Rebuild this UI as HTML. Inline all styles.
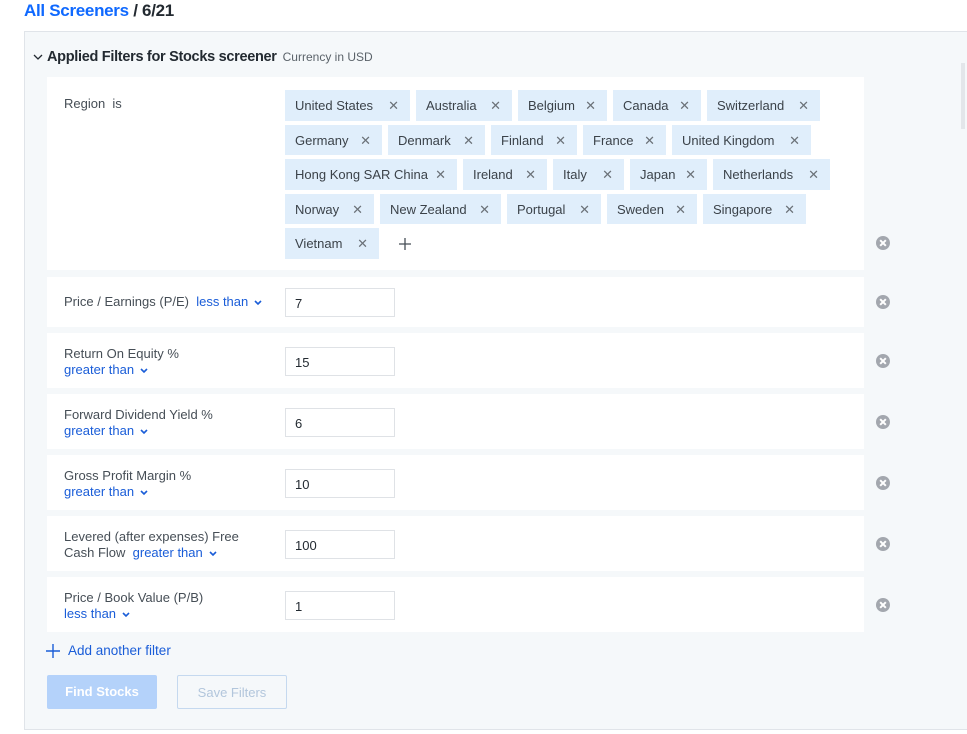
<!DOCTYPE html>
<html><head><meta charset="utf-8"><style>
*{box-sizing:border-box;margin:0;padding:0}
body{width:967px;height:734px;background:#fff;font-family:"Liberation Sans",sans-serif;position:relative;overflow:hidden;color:#464e56}
.a{position:absolute}
.h1{left:24px;top:1px;font-size:17px;font-weight:bold;color:#232a31;letter-spacing:-0.3px}
.h1 span{color:#0f69ff}
.box{left:24px;top:31px;width:960px;height:699px;background:#f5f8fa;border:1px solid #e0e4e9;border-right:none}
.ttl{left:47px;top:49px;font-size:14.5px;font-weight:bold;color:#232a31;letter-spacing:-0.3px}
.ttl small{font-size:12px;font-weight:normal;color:#5b636a;margin-left:6px;letter-spacing:0}
.chev{left:32px;top:51px;width:12px;height:12px}
.row{left:47px;width:817px;background:#fff}
.lbl{left:64px;font-size:13px;line-height:16px;color:#464e56}
.blue{color:#1a5dd8}
.dd{display:inline-block;width:8px;height:6px;margin-left:6px;vertical-align:middle}
.inp{left:285px;width:110px;height:29px;border:1px solid #dfe2e6;background:#fff;font-size:13px;color:#232a31;padding:7px 9px}
.tags{left:285px;top:90px;width:560px;display:flex;flex-wrap:wrap;row-gap:4px;column-gap:6px}
.tag{height:30.5px;background:#e0eefb;font-size:13px;color:#3b4249;padding:8px 0 0 10px;position:relative;white-space:nowrap}
.tag i{position:absolute;right:11px;top:8px;font-style:normal;font-size:13px;color:#6b7178}
.x{left:876px;width:14px;height:14px;border-radius:50%;background:#a3a7ae}
.x:before,.x:after{content:"";position:absolute;left:3px;top:6px;width:8px;height:2px;background:#fff;transform:rotate(45deg)}
.x:after{transform:rotate(-45deg)}
.btn{top:675px;width:110px;height:34px;font-size:13px;font-weight:bold;text-align:center;line-height:34px}
</style></head><body>
<div class="a h1"><span>All Screeners</span> / 6/21</div>
<div class="a box"></div>
<div class="a" style="left:961px;top:63px;width:4px;height:66px;background:#e3e6ea"></div>
<svg class="a chev" viewBox="0 0 12 12"><path d="M2 4l4 4 4-4" fill="none" stroke="#232a31" stroke-width="1.3"/></svg>
<div class="a ttl">Applied Filters for Stocks screener<small>Currency in USD</small></div>

<div class="a row" style="top:77px;height:193px"></div>
<div class="a lbl" style="top:96px">Region&nbsp; is</div>
<div class="a tags">
<div class="tag" style="width:125px">United States<i>✕</i></div>
<div class="tag" style="width:96px">Australia<i>✕</i></div>
<div class="tag" style="width:89px">Belgium<i>✕</i></div>
<div class="tag" style="width:88px">Canada<i>✕</i></div>
<div class="tag" style="width:113px">Switzerland<i>✕</i></div>
<div class="tag" style="width:97px">Germany<i>✕</i></div>
<div class="tag" style="width:97px">Denmark<i>✕</i></div>
<div class="tag" style="width:86px">Finland<i>✕</i></div>
<div class="tag" style="width:83px">France<i>✕</i></div>
<div class="tag" style="width:139px">United Kingdom<i>✕</i></div>
<div class="tag" style="width:172px">Hong Kong SAR China<i>✕</i></div>
<div class="tag" style="width:84px">Ireland<i>✕</i></div>
<div class="tag" style="width:71px">Italy<i>✕</i></div>
<div class="tag" style="width:77px">Japan<i>✕</i></div>
<div class="tag" style="width:117px">Netherlands<i>✕</i></div>
<div class="tag" style="width:89px">Norway<i>✕</i></div>
<div class="tag" style="width:121px">New Zealand<i>✕</i></div>
<div class="tag" style="width:94px">Portugal<i>✕</i></div>
<div class="tag" style="width:90px">Sweden<i>✕</i></div>
<div class="tag" style="width:103px">Singapore<i>✕</i></div>
<div class="tag" style="width:94px">Vietnam<i>✕</i></div>
<svg width="14" height="14" viewBox="0 0 14 14" style="margin:9px 0 0 13px"><path d="M7 1v12M1 7h12" stroke="#464e56" stroke-width="1.3"/></svg>
</div>
<div class="a x" style="top:236px"></div>

<div class="a row" style="top:277px;height:50px"></div>
<div class="a lbl" style="top:294px">Price / Earnings (P/E)&nbsp; <span class="blue">less than</span><svg class="dd" viewBox="0 0 8 6"><path d="M1 1l3 3 3-3" fill="none" stroke="#1a5dd8" stroke-width="1.6"/></svg></div>
<div class="a inp" style="top:288px">7</div>
<div class="a x" style="top:295px"></div>

<div class="a row" style="top:333px;height:55px"></div>
<div class="a lbl" style="top:346px">Return On Equity %<br><span class="blue">greater than</span><svg class="dd" viewBox="0 0 8 6"><path d="M1 1l3 3 3-3" fill="none" stroke="#1a5dd8" stroke-width="1.6"/></svg></div>
<div class="a inp" style="top:347px">15</div>
<div class="a x" style="top:354px"></div>

<div class="a row" style="top:394px;height:55px"></div>
<div class="a lbl" style="top:407px">Forward Dividend Yield %<br><span class="blue">greater than</span><svg class="dd" viewBox="0 0 8 6"><path d="M1 1l3 3 3-3" fill="none" stroke="#1a5dd8" stroke-width="1.6"/></svg></div>
<div class="a inp" style="top:408px">6</div>
<div class="a x" style="top:415px"></div>

<div class="a row" style="top:455px;height:55px"></div>
<div class="a lbl" style="top:468px">Gross Profit Margin %<br><span class="blue">greater than</span><svg class="dd" viewBox="0 0 8 6"><path d="M1 1l3 3 3-3" fill="none" stroke="#1a5dd8" stroke-width="1.6"/></svg></div>
<div class="a inp" style="top:469px">10</div>
<div class="a x" style="top:476px"></div>

<div class="a row" style="top:516px;height:55px"></div>
<div class="a lbl" style="top:529px">Levered (after expenses) Free<br>Cash Flow&nbsp; <span class="blue">greater than</span><svg class="dd" viewBox="0 0 8 6"><path d="M1 1l3 3 3-3" fill="none" stroke="#1a5dd8" stroke-width="1.6"/></svg></div>
<div class="a inp" style="top:530px">100</div>
<div class="a x" style="top:537px"></div>

<div class="a row" style="top:577px;height:55px"></div>
<div class="a lbl" style="top:590px">Price / Book Value (P/B)<br><span class="blue">less than</span><svg class="dd" viewBox="0 0 8 6"><path d="M1 1l3 3 3-3" fill="none" stroke="#1a5dd8" stroke-width="1.6"/></svg></div>
<div class="a inp" style="top:591px">1</div>
<div class="a x" style="top:598px"></div>

<svg class="a" style="left:46px;top:644px" width="14" height="14" viewBox="0 0 14 14"><path d="M7 0v14M0 7h14" stroke="#1a5dd8" stroke-width="1.4"/></svg>
<div class="a blue" style="left:68px;top:643px;font-size:13.5px">Add another filter</div>
<div class="a btn" style="left:47px;background:#b4d2fa;color:#fff;border-radius:2px">Find Stocks</div>
<div class="a btn" style="left:177px;border:1px solid #c5d9ef;color:#b2c6dc;border-radius:2px;font-weight:normal">Save Filters</div>
</body></html>
